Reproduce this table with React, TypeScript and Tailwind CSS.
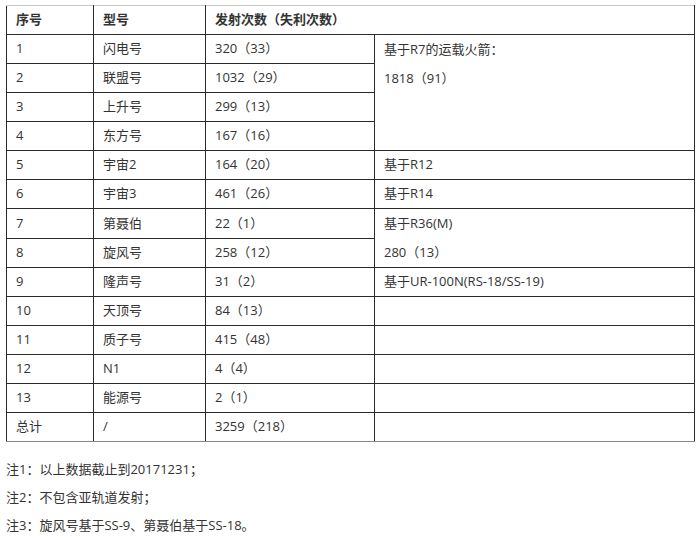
import React from "react";

const font = { fontFamily: '"Open Sans", "Noto Sans CJK SC", sans-serif' };

type Row = { n: string; name: string; count: string };
const rows: Row[] = [
  { n: "1", name: "闪电号", count: "320（33）" },
  { n: "2", name: "联盟号", count: "1032（29）" },
  { n: "3", name: "上升号", count: "299（13）" },
  { n: "4", name: "东方号", count: "167（16）" },
  { n: "5", name: "宇宙2", count: "164（20）" },
  { n: "6", name: "宇宙3", count: "461（26）" },
  { n: "7", name: "第聂伯", count: "22（1）" },
  { n: "8", name: "旋风号", count: "258（12）" },
  { n: "9", name: "隆声号", count: "31（2）" },
  { n: "10", name: "天顶号", count: "84（13）" },
  { n: "11", name: "质子号", count: "415（48）" },
  { n: "12", name: "N1", count: "4（4）" },
  { n: "13", name: "能源号", count: "2（1）" },
  { n: "总计", name: "/", count: "3259（218）" },
];

const td = "border border-[#2a2a2a] h-[29px] px-[9px] py-0 align-middle";

export default function App() {
  return (
    <div className="w-[700px] h-[538px] bg-white text-[13px] text-[#333]" style={font}>
      <div className="pt-[5px] pl-[6px]">
        <table className="table-fixed border-collapse w-[688px]">
          <colgroup>
            <col className="w-[87px]" />
            <col className="w-[112px]" />
            <col className="w-[169px]" />
            <col className="w-[320px]" />
          </colgroup>
          <thead>
            <tr>
              <th className={`${td} border-t-[#c8c8c8] text-left font-bold`}>序号</th>
              <th className={`${td} border-t-[#c8c8c8] text-left font-bold`}>型号</th>
              <th className={`${td} border-t-[#c8c8c8] text-left font-bold`} colSpan={2}>
                发射次数（失利次数）
              </th>
            </tr>
          </thead>
          <tbody>
            {rows.map((r, i) => (
              <tr key={r.n}>
                <td className={`${td} ${i === rows.length - 1 ? "border-b-[#888]" : ""}`}>{r.n}</td>
                <td className={`${td} ${i === rows.length - 1 ? "border-b-[#888]" : ""}`}>{r.name}</td>
                <td className={`${td} ${i === rows.length - 1 ? "border-b-[#888]" : ""}`}>{r.count}</td>
                {i === 0 && (
                  <td className={`${td} align-top py-0`} rowSpan={4}>
                    <div className="leading-[29px]">基于R7的运载火箭：</div>
                    <div className="leading-[29px]">1818（91）</div>
                  </td>
                )}
                {i === 4 && <td className={td}>基于R12</td>}
                {i === 5 && <td className={td}>基于R14</td>}
                {i === 6 && (
                  <td className={`${td} align-top`} rowSpan={2}>
                    <div className="leading-[29px]">基于R36(M)</div>
                    <div className="leading-[29px]">280（13）</div>
                  </td>
                )}
                {i === 8 && <td className={td}>基于UR-100N(RS-18/SS-19)</td>}
                {i >= 9 && <td className={`${td} ${i === rows.length - 1 ? "border-b-[#888]" : ""}`}></td>}
              </tr>
            ))}
          </tbody>
        </table>
        <div className="mt-[13px]">
          <p className="leading-[28px]">注1：以上数据截止到20171231；</p>
          <p className="leading-[28px]">注2：不包含亚轨道发射；</p>
          <p className="leading-[28px]">注3：旋风号基于SS-9、第聂伯基于SS-18。</p>
        </div>
      </div>
    </div>
  );
}
